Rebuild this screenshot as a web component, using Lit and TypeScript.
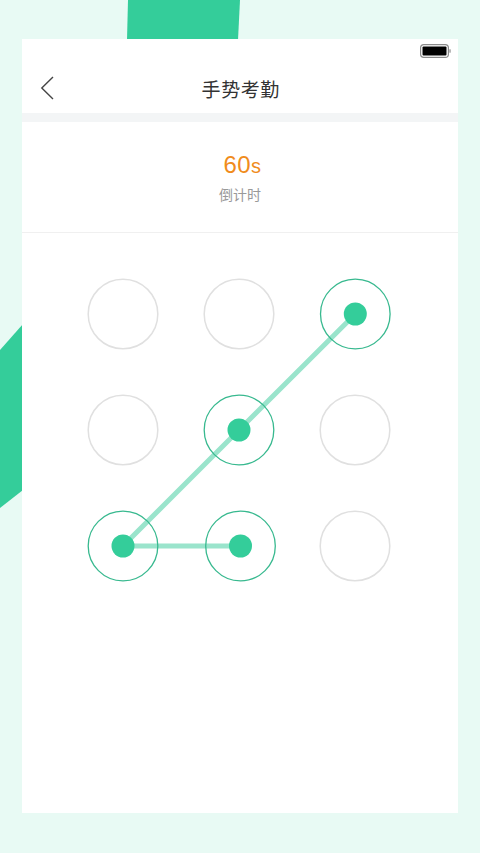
import { LitElement, html, css, svg } from "lit";
import { customElement } from "lit/decorators.js";

const OFFSET_X = 22;
const OFFSET_Y = 233;
const nodes = [
  { x: 123, y: 314, on: false },
  { x: 239, y: 314, on: false },
  { x: 355.3, y: 314, on: true },
  { x: 123, y: 430, on: false },
  { x: 239, y: 430, on: true },
  { x: 355, y: 430, on: false },
  { x: 123, y: 546, on: true },
  { x: 240.5, y: 546, on: true },
  { x: 355, y: 546, on: false },
];
const path = [nodes[2], nodes[4], nodes[6], nodes[7]];

@customElement("app-root")
export class AppRoot extends LitElement {
  static styles = css`
    :host {
      display: block;
      width: 480px;
      height: 853px;
      background: #e8faf4;
      position: relative;
      overflow: hidden;
      font-family: "Liberation Sans", "Noto Sans CJK SC", sans-serif;
    }
    .deco {
      position: absolute;
      left: 0;
      top: 0;
      display: block;
    }
    .page {
      box-sizing: border-box;
      height: 853px;
      padding: 39px 22px 40px;
      display: flex;
      position: relative;
    }
    .card {
      flex: 1;
      background: #fff;
      display: flex;
      flex-direction: column;
    }
    .status {
      height: 24px;
      display: flex;
      justify-content: flex-end;
      align-items: flex-start;
      padding: 5px 7px 0 0;
      box-sizing: border-box;
    }
    .status svg {
      display: block;
    }
    .nav {
      height: 50px;
      position: relative;
      display: flex;
      align-items: center;
      justify-content: center;
      padding-left: 1.5px;
      font-family: "Noto Sans CJK SC", sans-serif;
      font-size: 19px;
      color: #333;
      letter-spacing: 0.6px;
    }
    .back {
      position: absolute;
      left: 18px;
      top: 12px;
      display: block;
    }
    .strip {
      height: 9px;
      background: #f3f5f6;
    }
    .timer {
      height: 111px;
      box-sizing: border-box;
      border-bottom: 1px solid #f0f0f0;
      display: flex;
      flex-direction: column;
      align-items: center;
      padding-top: 30px;
    }
    .count {
      color: #f08c1c;
      font-size: 24px;
      line-height: 26px;
      letter-spacing: 0.5px;
      padding-left: 5px;
    }
    .count small {
      font-size: 20px;
    }
    .label {
      margin-top: 5px;
      color: #999;
      font-size: 14px;
      line-height: 20px;
      font-family: "Noto Sans CJK SC", sans-serif;
    }
    .pattern {
      flex: 1;
      display: block;
      width: 100%;
    }
  `;

  render() {
    return html`
      <svg class="deco" width="480" height="853" viewBox="0 0 480 853">
        <polygon points="128,0 240,0 238,40 127,40" fill="#34cd9a"></polygon>
        <polygon points="0,350 23,324 23,490 0,508" fill="#34cd9a"></polygon>
      </svg>
      <div class="page">
        <div class="card">
          <div class="status">
            <svg width="31" height="15" viewBox="0 0 31 15">
              <rect x="0.6" y="0.6" width="27.8" height="12.8" rx="3.2" fill="#fff" stroke="#8a8a8a" stroke-width="1.2"></rect>
              <rect x="2.5" y="2.5" width="24" height="9" rx="1" fill="#000"></rect>
              <rect x="29.4" y="5.3" width="1.2" height="3.4" fill="#8a8a8a"></rect>
            </svg>
          </div>
          <div class="nav">
            <svg class="back" width="16" height="26" viewBox="0 0 16 26">
              <path d="M13 2 L1.8 13 L13 24" fill="none" stroke="#444" stroke-width="1.4"></path>
            </svg>
            手势考勤
          </div>
          <div class="strip"></div>
          <div class="timer">
            <div class="count">60<small>s</small></div>
            <div class="label">倒计时</div>
          </div>
          <svg class="pattern" viewBox="${OFFSET_X} ${OFFSET_Y} 436 580">
            <polyline
              points="${path.map((n) => `${n.x},${n.y}`).join(" ")}"
              fill="none"
              stroke="#9ae4cc"
              stroke-width="5"
            ></polyline>
            ${nodes.map(
              (n) => svg`
                <circle cx=${n.x} cy=${n.y} r="34.8" fill="none"
                  stroke=${n.on ? "#38b98f" : "#e0e0e0"} stroke-width=${n.on ? 1.3 : 1.5}></circle>
                ${n.on ? svg`<circle cx=${n.x} cy=${n.y} r="11.5" fill="#34cd9a"></circle>` : null}
              `
            )}
          </svg>
        </div>
      </div>
    `;
  }
}
